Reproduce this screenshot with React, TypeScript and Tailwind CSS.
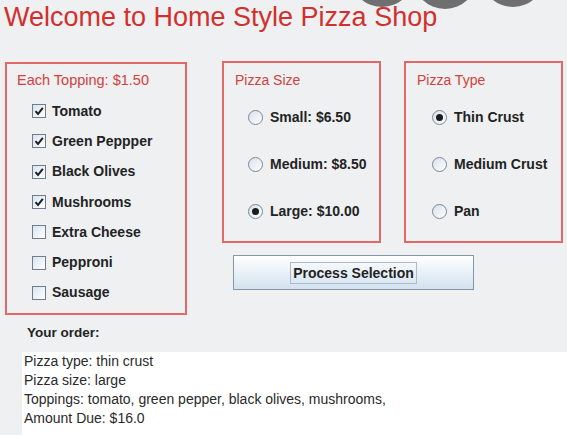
import React from 'react';

const toppings = [
  { name: 'Tomato', checked: true },
  { name: 'Green Peppper', checked: true },
  { name: 'Black Olives', checked: true },
  { name: 'Mushrooms', checked: true },
  { name: 'Extra Cheese', checked: false },
  { name: 'Pepproni', checked: false },
  { name: 'Sausage', checked: false },
];

const sizes = [
  { name: 'Small: $6.50', checked: false },
  { name: 'Medium: $8.50', checked: false },
  { name: 'Large: $10.00', checked: true },
];

const types = [
  { name: 'Thin Crust', checked: true },
  { name: 'Medium Crust', checked: false },
  { name: 'Pan', checked: false },
];

function CheckBox({ checked }: { checked: boolean }) {
  return (
    <span className="w-[14px] h-[14px] border border-[#6f7d8c] bg-gradient-to-br from-[#d9e4ef] to-[#ffffff] flex items-center justify-center">
      {checked && (
        <svg width="10" height="10" viewBox="0 0 10 10">
          <path d="M1.5 5.2 L4 8 L8.8 1.8" fill="none" stroke="#1e1e1e" strokeWidth="2" />
        </svg>
      )}
    </span>
  );
}

function Radio({ checked }: { checked: boolean }) {
  return (
    <span className="w-[15px] h-[15px] rounded-full border border-[#7c8794] bg-gradient-to-br from-[#d6e1ec] to-[#ffffff] flex items-center justify-center">
      {checked && <span className="w-[7px] h-[7px] rounded-full bg-[#1c1c1c]" />}
    </span>
  );
}

function RadioBox({ title, items, indent }: { title: string; items: { name: string; checked: boolean }[]; indent: string }) {
  return (
    <div className="w-[159px] h-[182px] border-2 border-[#df6a68] pl-[11px] pt-[9px]">
      <div className="text-[14px] leading-[16px] text-[#d2423d]">{title}</div>
      <div className={`mt-[6px] ${indent}`}>
        {items.map((it) => (
          <div key={it.name} className="h-[47px] flex items-center gap-[7px]">
            <Radio checked={it.checked} />
            <span className="text-[14px] font-bold text-[#232323]">{it.name}</span>
          </div>
        ))}
      </div>
    </div>
  );
}

export default function App() {
  return (
    <div className="relative w-[567px] h-[435px] overflow-hidden bg-[#eef0f2] font-['Liberation_Sans',Arial,sans-serif] flex flex-col">
      {/* window buttons peeking over the top */}
      <span className="absolute left-[350px] top-[-57px] w-[64px] h-[64px] rounded-full bg-[#6f6f6f]" />
      <span className="absolute left-[413px] top-[-55px] w-[64px] h-[64px] rounded-full bg-[#6f6f6f]" />
      <span className="absolute left-[481px] top-[-57px] w-[64px] h-[64px] rounded-full bg-[#6f6f6f]" />

      <h1 className="relative pl-[4px] pt-[2px] text-[27px] leading-[30px] text-[#d2302c]">
        Welcome to Home Style Pizza Shop
      </h1>

      <div className="flex items-start mt-[29px]">
        <div className="ml-[5px] mt-[1px] w-[182px] h-[253px] border-2 border-[#df6a68] pt-[8px]">
          <div className="pl-[10px] text-[14.5px] leading-[16px] text-[#d2423d]">Each Topping: $1.50</div>
          <div className="mt-[8px] pl-[25px]">
            {toppings.map((t) => (
              <div key={t.name} className="h-[30.3px] flex items-center gap-[6px]">
                <CheckBox checked={t.checked} />
                <span className="text-[14px] font-bold text-[#232323]">{t.name}</span>
              </div>
            ))}
          </div>
        </div>

        <div className="ml-[35px] flex flex-col">
          <div className="flex gap-[23px]">
            <RadioBox title="Pizza Size" items={sizes} indent="pl-[13px]" />
            <RadioBox title="Pizza Type" items={types} indent="pl-[15px]" />
          </div>
          <button className="ml-[11px] mt-[12px] w-[241px] h-[35px] border border-[#8796a6] bg-gradient-to-b from-[#ffffff] to-[#d3e2ef] flex items-center justify-center">
            <span className="border border-[#a9bccf] px-[2px] text-[14px] leading-[20px] font-bold text-[#232323]">
              Process Selection
            </span>
          </button>
        </div>
      </div>

      <div className="ml-[27px] mt-[9px] text-[13.5px] leading-[18px] font-bold text-[#232323]">Your order:</div>

      <div className="ml-[22px] mt-[10px] flex-1 bg-white pl-[2px] text-[14px] leading-[19px] text-[#2a2a2a]">
        <div>Pizza type: thin crust</div>
        <div>Pizza size: large</div>
        <div>Toppings: tomato, green pepper, black olives, mushrooms,</div>
        <div>Amount Due: $16.0</div>
      </div>
    </div>
  );
}
